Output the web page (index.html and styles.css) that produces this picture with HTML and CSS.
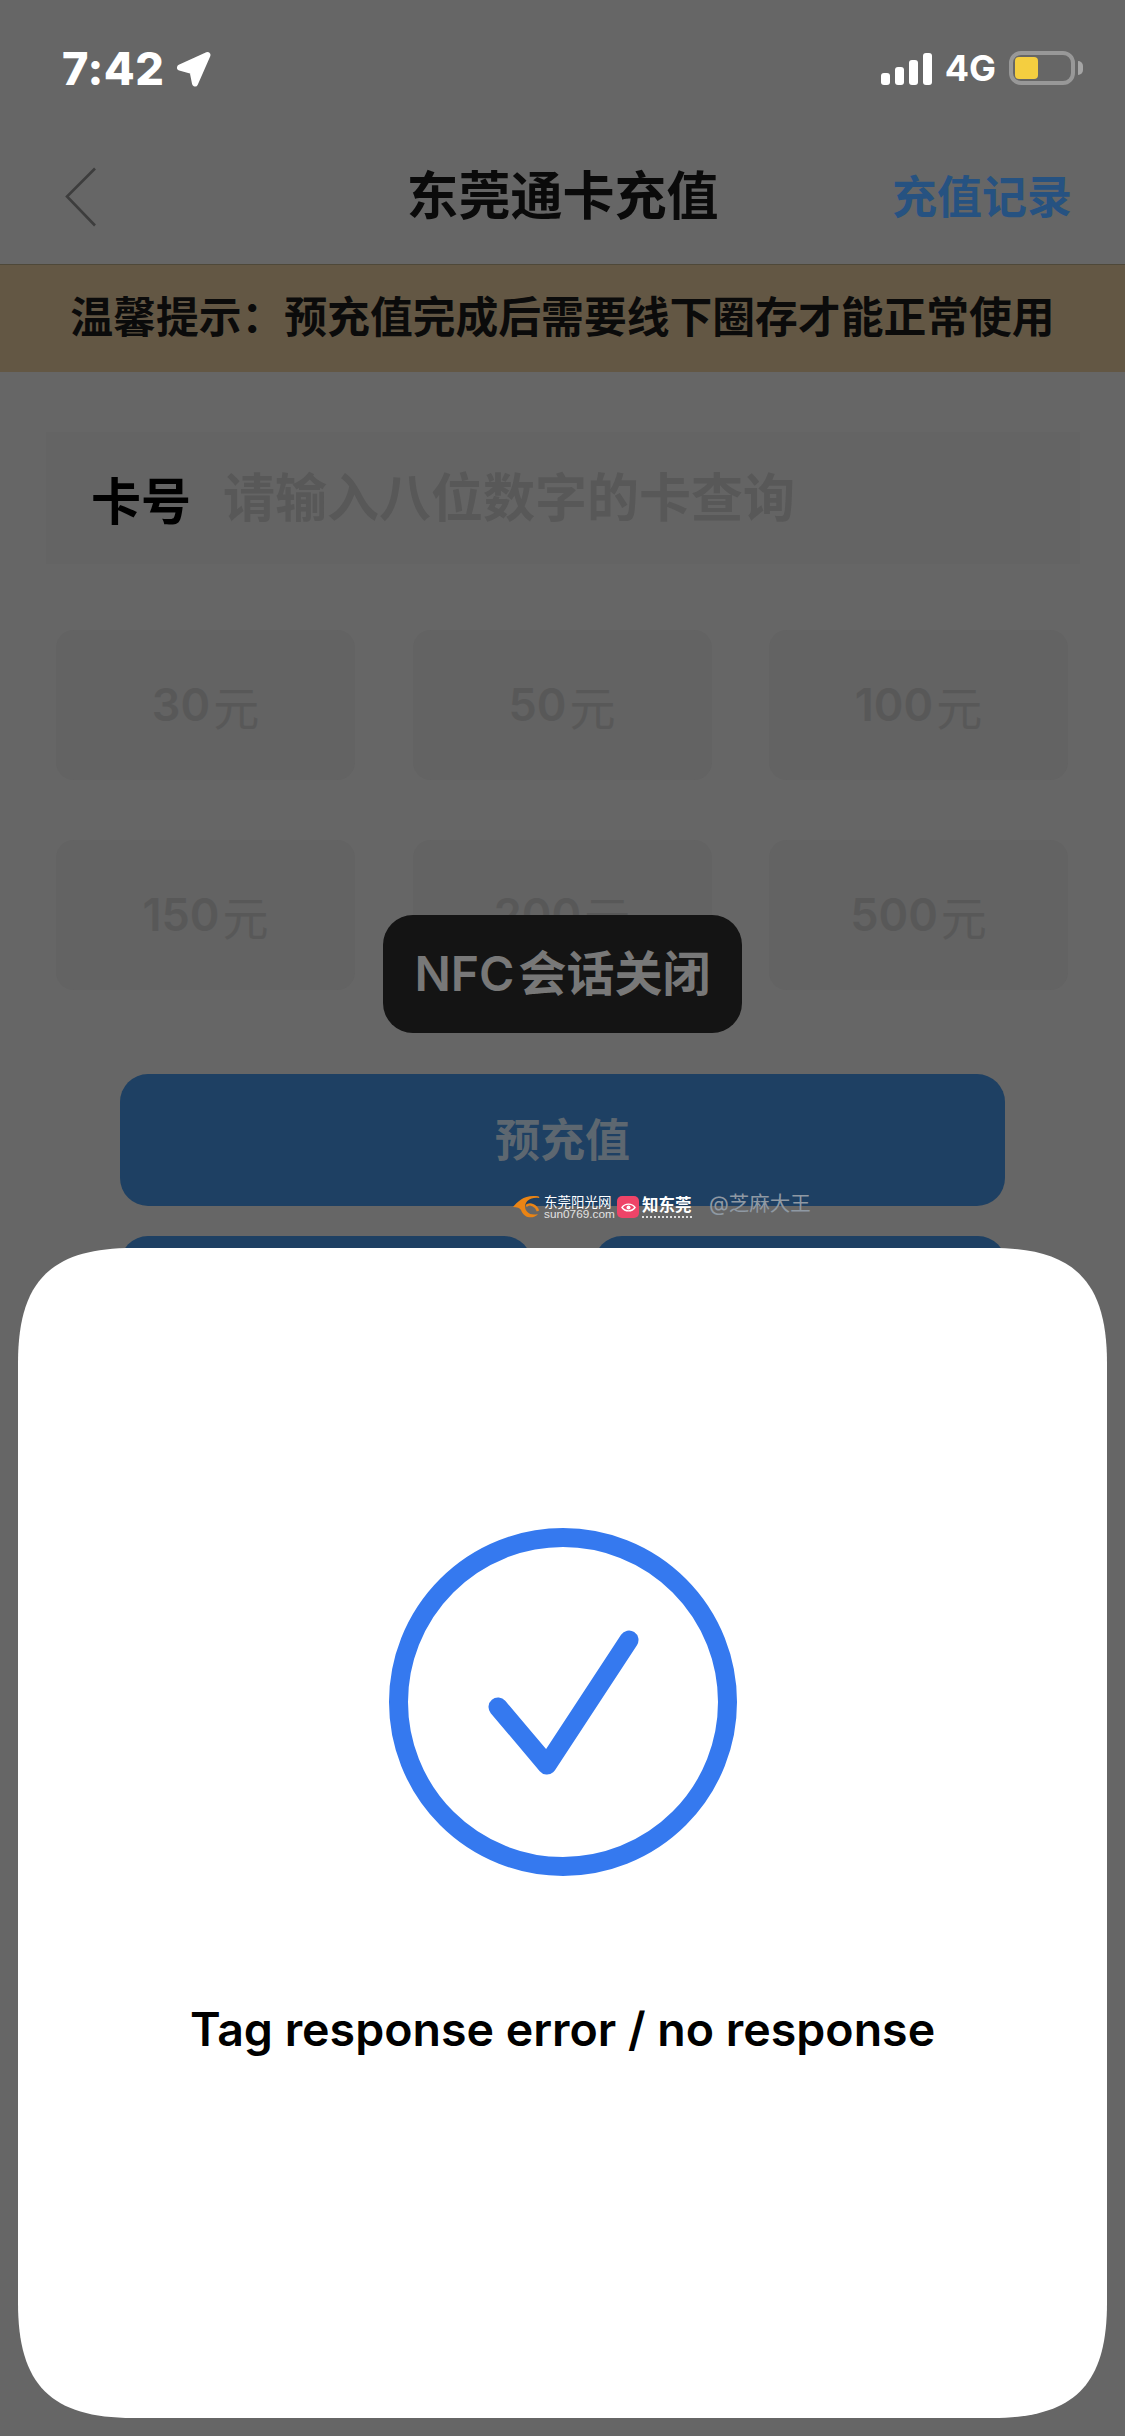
FILE: index.html
```html
<!DOCTYPE html>
<html lang="zh-CN">
<head>
<meta charset="utf-8">
<title>东莞通卡充值</title>
<link rel="stylesheet" href="styles.css">
</head>
<body>
<div class="phone">
  <header class="statusbar">
    <div class="status-left">
      <span class="time">7:42</span>
      <svg class="loc" width="38" height="38" viewBox="0 0 38 38"><path d="M5 17.500 32.500 5 20 33.500 17.500 21z" fill="#fff" stroke="#fff" stroke-width="6" stroke-linejoin="round"/></svg>
    </div>
    <div class="status-right">
      <div class="signal"><i class="b1"></i><i class="b2"></i><i class="b3"></i><i class="b4"></i></div>
      <span class="net">4G</span>
      <div class="battery"><div class="battery-fill"></div></div>
      <div class="battery-nub"></div>
    </div>
  </header>

  <nav class="navbar">
    <svg class="back" width="32" height="60" viewBox="0 0 32 60"><path d="M30 1.500 2 29.500 30 58.500" fill="none" stroke="#3d3d3d" stroke-width="2.600"/></svg>
    <h1 class="title">东莞通卡充值</h1>
    <a class="record">充值记录</a>
  </nav>

  <div class="notice">温馨提示：预充值完成后需要线下圈存才能正常使用</div>

  <main class="content">
    <div class="card-input">
      <span class="card-label">卡号</span>
      <span class="card-placeholder">请输入八位数字的卡查询</span>
    </div>
    <div class="amounts">
      <div class="amount">30<span class="unit">元</span></div>
      <div class="amount">50<span class="unit">元</span></div>
      <div class="amount">100<span class="unit">元</span></div>
      <div class="amount">150<span class="unit">元</span></div>
      <div class="amount">200<span class="unit">元</span></div>
      <div class="amount">500<span class="unit">元</span></div>
    </div>
    <button class="primary">预充值</button>
    <div class="secondary-row">
      <button class="secondary"></button>
      <button class="secondary"></button>
    </div>
  </main>

  <div class="toast">NFC 会话关闭</div>

  <div class="watermark">
    <svg class="wm-sun" width="30" height="28" viewBox="0 0 30 28"><path d="M1 14C6 8 12 2 24 3 27 3 28 4 27 5 18 4 14 8 13 13 13 19 18 23 26 21 22 26 12 26 9 17 8 15 5 14 1 14z" fill="#ea8414"/><path d="M14 13C18 10 24 12 26 18" fill="none" stroke="#ea8414" stroke-width="2.500"/></svg>
    <div class="wm-site">
      <span class="wm-site-cn">东莞阳光网</span>
      <span class="wm-site-en">sun0769.com</span>
    </div>
    <div class="wm-pink"><svg width="15" height="11" viewBox="0 0 15 11"><path d="M1 5.500C4 1 11 1 14 5.500 11 10 4 10 1 5.500z" fill="none" stroke="#fff" stroke-width="1.400"/><circle cx="7.500" cy="5.500" r="2" fill="#fff"/></svg></div>
    <div class="wm-zhi">
      <span class="wm-zhi-cn">知东莞</span>
      <span class="wm-dots"></span>
    </div>
    <span class="wm-user">@芝麻大王</span>
  </div>

  <section class="sheet">
    <svg class="check" width="348" height="348" viewBox="0 0 348 348">
      <circle cx="174" cy="174" r="164.500" fill="none" stroke="#3579ef" stroke-width="19"/>
      <path d="M109 179 158 237 240 112" fill="none" stroke="#3579ef" stroke-width="19" stroke-linecap="round" stroke-linejoin="round"/>
    </svg>
    <p class="message">Tag response error / no response</p>
  </section>
</div>
</body>
</html>
```

FILE: styles.css
```css
* { box-sizing: border-box; }
html, body { margin: 0; padding: 0; }
body {
  width: 1125px;
  height: 2436px;
  overflow: hidden;
  background: #666;
  font-family: Inter, "Noto Sans CJK SC", sans-serif;
}
.phone {
  position: relative;
  width: 1125px;
  height: 2436px;
  overflow: hidden;
  background: #666;
}

/* status bar */
.statusbar {
  height: 130px;
  padding: 50px 42px 0 62px;
  display: flex;
  justify-content: space-between;
  align-items: flex-start;
}
.status-left { display: flex; align-items: center; gap: 11px; }
.time { font-size: 45px; line-height: 38px; font-weight: 800; color: #fff; letter-spacing: 0.5px; }
.status-right { display: flex; align-items: center; height: 36px; }
.signal { display: flex; align-items: flex-end; gap: 5px; height: 33px; margin-right: 13px; }
.signal i { display: block; width: 9px; background: #fff; border-radius: 3px; }
.signal .b1 { height: 12px; }
.signal .b2 { height: 18px; }
.signal .b3 { height: 25px; }
.signal .b4 { height: 32px; }
.net { font-size: 36px; line-height: 36px; font-weight: 700; color: #fff; margin-right: 13px; }
.battery {
  width: 66px;
  height: 34px;
  border: 4px solid #989898;
  border-radius: 12px;
  padding: 2px;
}
.battery-fill { width: 23px; height: 22px; background: #f4ce40; border-radius: 4px; }
.battery-nub { width: 5px; height: 14px; margin-left: 3px; background: #a5a5a5; border-radius: 0 7px 7px 0; }

/* nav */
.navbar {
  position: relative;
  height: 134px;
  display: flex;
  align-items: center;
  justify-content: center;
}
.back { position: absolute; left: 65px; top: 37px; }
.title { margin: 0; font-size: 52px; line-height: 60px; font-weight: 700; color: #0a0a0a; }
.record {
  position: absolute;
  right: 53px;
  top: 38px;
  font-size: 45px;
  line-height: 60px;
  font-weight: 700;
  color: #265281;
}

/* notice */
.notice {
  height: 108px;
  border-top: 1px solid #4e4839;
  background: #635744;
  color: #0b0b0b;
  font-size: 42.800px;
  line-height: 106px;
  font-weight: 700;
  text-align: center;
  white-space: nowrap;
}

/* form */
.content { padding-top: 60px; }
.card-input {
  width: 1034px;
  height: 132px;
  margin-left: 46px;
  padding-left: 45px;
  background: #646464;
  display: flex;
  align-items: center;
  gap: 32px;
}
.card-label { font-size: 50px; font-weight: 700; color: #000; }
.card-placeholder { font-size: 52px; line-height: 60px; margin-top: 1px; font-weight: 700; color: #585858; }
.amounts {
  margin: 66px 0 0 56px;
  width: 1013px;
  display: grid;
  grid-template-columns: repeat(3, 299px);
  grid-auto-rows: 150px;
  column-gap: 57.500px;
  row-gap: 60px;
}
.amount {
  background: #636363;
  border-radius: 18px;
  display: flex;
  align-items: center;
  justify-content: center;
  padding-bottom: 1px;
  font-size: 45px;
  font-weight: 600;
  color: #585858;
}
.unit { font-size: 46px; font-weight: 400; margin-left: 3px; }
.primary {
  display: block;
  width: 885px;
  height: 132px;
  margin: 84px 0 0 120px;
  padding: 0 0 6px;
  border: 0;
  border-radius: 28px;
  background: #1e4063;
  color: #5d6770;
  font-family: inherit;
  font-size: 45px;
  font-weight: 700;
}
.secondary-row {
  display: flex;
  gap: 62px;
  margin: 30px 0 0 120px;
}
.secondary {
  width: 412px;
  height: 100px;
  border: 0;
  border-radius: 28px;
  background: #1e4063;
}

/* toast */
.toast {
  position: absolute;
  left: 383px;
  top: 915px;
  width: 359px;
  height: 118px;
  border-radius: 30px;
  background: #141414;
  color: #787878;
  font-size: 48px;
  font-weight: 600;
  word-spacing: -8px;
  line-height: 118px;
  text-align: center;
  white-space: nowrap;
}

/* watermark */
.watermark {
  position: absolute;
  left: 512px;
  top: 1193px;
  height: 28px;
  display: flex;
  align-items: center;
  color: #fff;
}
.wm-sun { flex: none; margin-right: 2px; }
.wm-site { display: flex; flex-direction: column; width: 70px; margin-right: 3px; }
.wm-site-cn { font-size: 13.500px; line-height: 14px; white-space: nowrap; }
.wm-site-en { font-size: 11.800px; line-height: 11px; color: #e2e2e2; white-space: nowrap; font-family: "Liberation Sans", sans-serif; }
.wm-pink {
  flex: none;
  width: 22px;
  height: 22px;
  border-radius: 5px;
  background: #ee4468;
  display: flex;
  align-items: center;
  justify-content: center;
  margin-right: 3px;
}
.wm-zhi { display: flex; flex-direction: column; width: 50px; margin-right: 17px; }
.wm-zhi-cn { font-size: 16.500px; line-height: 18px; font-weight: 700; white-space: nowrap; }
.wm-dots { height: 2px; margin-top: 2px; border-top: 2px dotted #ddd; }
.wm-user { font-size: 20.500px; line-height: 24px; color: #8f99a3; white-space: nowrap; margin-top: -6px; }

/* sheet */
.sheet {
  position: absolute;
  left: 18px;
  top: 1248px;
  width: 1089px;
  height: 1170px;
  background: #fff;
  clip-path: path("M0 115C0 33 33 0 115 0H974C1056 0 1089 33 1089 115V1055C1089 1137 1056 1170 974 1170H115C33 1170 0 1137 0 1055Z");
  display: flex;
  flex-direction: column;
  align-items: center;
  padding-top: 280px;
}
.check { display: block; flex: none; }
.message {
  margin: 125px 0 0;
  font-size: 46.500px;
  line-height: 56px;
  font-weight: 600;
  color: #000;
  white-space: nowrap;
}
```
